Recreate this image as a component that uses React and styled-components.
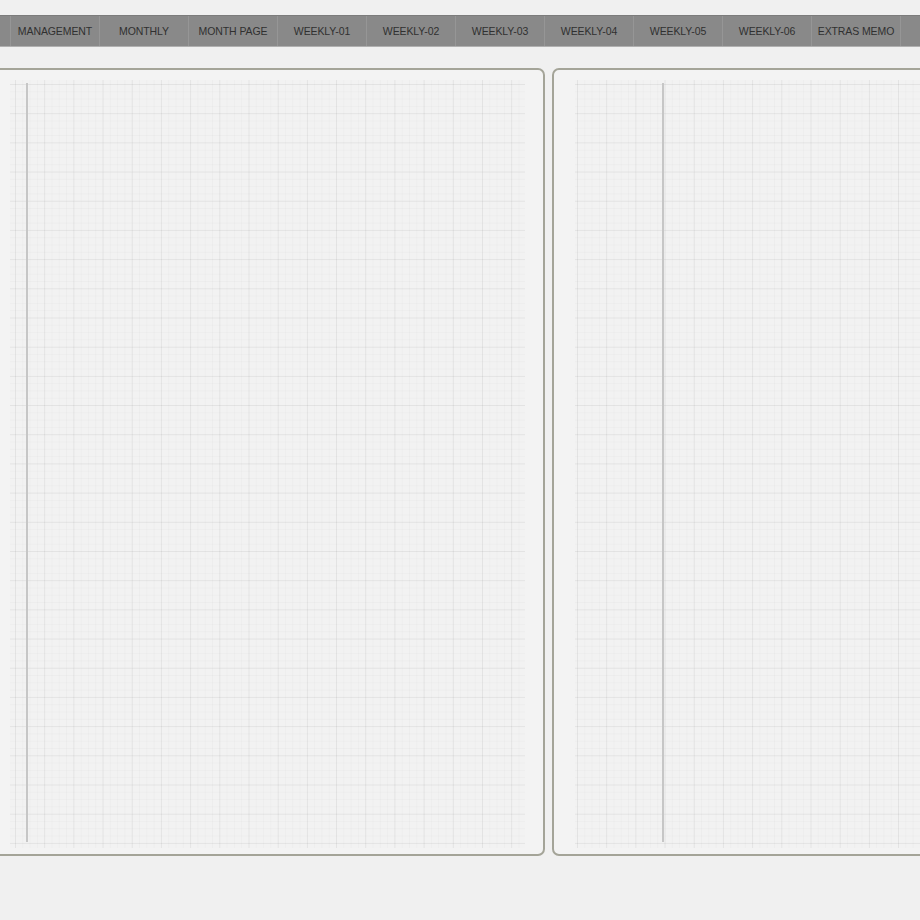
import React from "react";
import styled, { createGlobalStyle } from "styled-components";

const GlobalStyle = createGlobalStyle`
  html, body {
    margin: 0;
    padding: 0;
    background: #f0f0f0;
    overflow: hidden;
  }
`;

const Screen = styled.div`
  width: 920px;
  height: 920px;
  overflow: hidden;
  padding-top: 15px;
  box-sizing: border-box;
  font-family: "Liberation Sans", Arial, sans-serif;
`;

const TabBar = styled.nav`
  display: flex;
  height: 32px;
  margin-left: -78px;
  background: #898989;
  border-top: 1px solid #7c7c7c;
  border-bottom: 1px solid #b0b0b0;
  box-sizing: border-box;
`;

const Tab = styled.div`
  flex: 0 0 89px;
  display: flex;
  align-items: center;
  justify-content: center;
  border-right: 1px solid #969696;
  box-sizing: border-box;
  font-size: 10.5px;
  color: #303030;
  letter-spacing: -0.1px;
  white-space: nowrap;
`;

const Spread = styled.div`
  display: flex;
  gap: 7px;
  margin-top: 21px;
  margin-left: -15px;
`;

const Page = styled.section`
  flex: 0 0 560px;
  height: 788px;
  box-sizing: border-box;
  border: 2px solid #a4a498;
  border-radius: 7px;
  background: #f3f3f3;
  padding: ${(p) => p.$pad};
  display: flex;
`;

const GridArea = styled.div`
  flex: 1;
  display: flex;
  padding-left: ${(p) => p.$margin}px;
  background-color: #f2f2f2;
  background-image:
    linear-gradient(to right, rgba(0, 0, 0, 0.045) 1px, transparent 1px),
    linear-gradient(to bottom, rgba(0, 0, 0, 0.045) 1px, transparent 1px),
    linear-gradient(to right, rgba(0, 0, 0, 0.018) 1px, transparent 1px),
    linear-gradient(to bottom, rgba(0, 0, 0, 0.018) 1px, transparent 1px);
  background-size: 29.2px 29.2px, 29.2px 29.2px, 7.3px 7.3px, 7.3px 7.3px;
  background-position: ${(p) => p.$offset};
`;

const MarginLine = styled.div`
  width: 2px;
  margin: 3px 0 6px;
  background: #c6c6c6;
`;

const tabs = [
  "",
  "MANAGEMENT",
  "MONTHLY",
  "MONTH PAGE",
  "WEEKLY-01",
  "WEEKLY-02",
  "WEEKLY-03",
  "WEEKLY-04",
  "WEEKLY-05",
  "WEEKLY-06",
  "EXTRAS MEMO",
  "",
];

const App = () => (
  <>
    <GlobalStyle />
    <Screen>
      <TabBar>
        {tabs.map((t, i) => (
          <Tab key={i}>{t}</Tab>
        ))}
      </TabBar>
      <Spread>
        <Page $pad="10px 18px 6px 23px">
          <GridArea $margin={16} $offset="5px 4px">
            <MarginLine />
          </GridArea>
        </Page>
        <Page $pad="10px 18px 6px 21px">
          <GridArea $margin={87} $offset="2px 4px">
            <MarginLine />
          </GridArea>
        </Page>
      </Spread>
    </Screen>
  </>
);

export default App;
